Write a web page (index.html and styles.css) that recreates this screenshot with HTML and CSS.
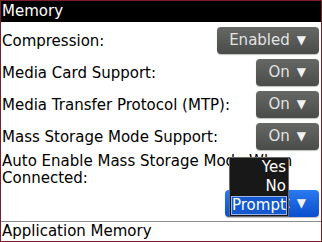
FILE: index.html
```html
<!DOCTYPE html>
<html lang="en">
<head>
    <meta charset="UTF-8">
    <title>Memory</title>
    <link rel="stylesheet" href="styles.css">
</head>
<body>
    <div class="screen">
        <div class="title-bar">Memory</div>
        <div class="row first">
            <span class="label">Compression:</span>
            <span class="choice">Enabled<span class="arrow">&#9660;</span></span>
        </div>
        <div class="row">
            <span class="label">Media Card Support:</span>
            <span class="choice">On<span class="arrow">&#9660;</span></span>
        </div>
        <div class="row">
            <span class="label">Media Transfer Protocol (MTP):</span>
            <span class="choice">On<span class="arrow">&#9660;</span></span>
        </div>
        <div class="row">
            <span class="label">Mass Storage Mode Support:</span>
            <span class="choice">On<span class="arrow">&#9660;</span></span>
        </div>
        <div class="block">
            <div class="label wrap">Auto Enable Mass Storage Mode When Connected:</div>
            <div class="right">
                <span class="choice focused">Prompt<span class="arrow">&#9660;</span></span>
            </div>
            <ul class="popup">
                <li>Yes</li>
                <li>No</li>
                <li class="selected">Prompt</li>
            </ul>
        </div>
        <div class="section">Application Memory</div>
    </div>
</body>
</html>
```

FILE: styles.css
```css
* {
    box-sizing: border-box;
}

body {
    margin: 0;
    font-family: "DejaVu Sans", sans-serif;
    font-size: 15px;
    color: #000;
}

.screen {
    width: 322px;
    height: 242px;
    border: 1px solid #7a1d2a;
    background-color: #fff;
    overflow: hidden;
}

.title-bar {
    background-color: #000;
    color: #fff;
    height: 21px;
    line-height: 20px;
    padding-left: 1px;
}

.row {
    display: flex;
    justify-content: space-between;
    align-items: center;
    height: 32px;
    padding: 0 2px 0 1px;
}

.row.first {
    margin-top: 2px;
}

.row .label {
    padding-top: 1px;
}

.choice {
    display: inline-block;
    height: 27px;
    line-height: 27px;
    padding: 0 13px 0 12px;
    border-radius: 4px;
    background: linear-gradient(#666866, #4a4c4a);
    color: #e2e2e2;
    box-shadow: 0 1px 1px rgba(0, 0, 0, 0.25);
}

.arrow {
    font-size: 12px;
    margin-left: 7px;
    vertical-align: 1px;
    color: #f2f2f2;
}

.choice.focused {
    background: linear-gradient(#2a7af0, #0a4ecd);
    padding-left: 11px;
}

.block {
    position: relative;
    padding: 0 2px 0 1px;
    height: 70px;
    border-bottom: 1px solid #8c8c8c;
}

.wrap {
    line-height: 17px;
    padding-top: 1px;
}

.right {
    display: flex;
    justify-content: flex-end;
    margin-top: 3px;
}

.popup {
    position: absolute;
    left: 228px;
    top: 5px;
    width: 60px;
    margin: 0;
    padding: 0 1px 1px 1px;
    list-style: none;
    background-color: #181818;
    border: 1px solid #6a6a6a;
    color: #fff;
    text-align: right;
}

.popup li {
    line-height: 19px;
    padding-right: 1px;
}

.popup li.selected {
    background-color: #1658cf;
    border: 1px solid #9bb6e6;
    line-height: 17px;
}

.section {
    padding-left: 1px;
    line-height: 18px;
}
```
